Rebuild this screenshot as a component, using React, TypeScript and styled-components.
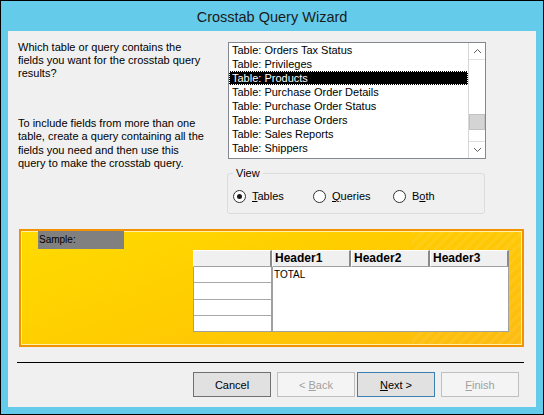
import React from 'react';
import styled, { createGlobalStyle } from 'styled-components';

const Global = createGlobalStyle`
  html, body { margin: 0; padding: 0; background: #ffffff; }
  body { font-family: "Liberation Sans", Arial, sans-serif; color: #000; }
  * { box-sizing: border-box; }
`;

const Window = styled.div`
  width: 544px;
  height: 415px;
  border: 1px solid #000;
  background: #65cbea;
  display: flex;
  flex-direction: column;
`;

const TitleBar = styled.div`
  height: 30px;
  display: flex;
  align-items: center;
  justify-content: center;
  font-size: 14.5px;
  color: #1a1a1a;
  padding-top: 1px;
`;

const Client = styled.div`
  margin: 0 7px 0 7px;
  height: 376px;
  background: #f0f0f0;
  display: flex;
  flex-direction: column;
  font-size: 11px;
`;

const TopRow = styled.div`
  display: flex;
  padding-left: 10px;
`;

const Instructions = styled.div`
  width: 210px;
  padding-top: 9.6px;
`;

const Para = styled.p<{ $gap?: number }>`
  margin: ${(p) => p.$gap ?? 0}px 0 0 0;
  line-height: 13.4px;
  white-space: nowrap;
`;

const RightCol = styled.div`
  width: 258px;
  padding-top: 11px;
  display: flex;
  flex-direction: column;
`;

const ListBox = styled.div`
  height: 117px;
  border: 1px solid #828790;
  background: #fff;
  display: flex;
  overflow: hidden;
`;

const ListItems = styled.div`
  flex: 1;
  display: flex;
  flex-direction: column;
  overflow: hidden;
`;

const ListItem = styled.div<{ $selected?: boolean }>`
  height: 14px;
  flex: none;
  line-height: 14px;
  padding-left: 3px;
  white-space: nowrap;
  background: ${(p) => (p.$selected ? '#000' : 'transparent')};
  color: ${(p) => (p.$selected ? '#fff' : '#000')};
  outline: ${(p) => (p.$selected ? '1px dotted #fff' : 'none')};
  outline-offset: -1px;
`;

const ScrollBar = styled.div`
  width: 17px;
  flex: none;
  display: flex;
  flex-direction: column;
  background: #fff;
  border-left: 1px solid #d6d6d6;
`;

const ScrollButton = styled.div<{ $bottom?: boolean }>`
  height: 17px;
  flex: none;
  display: flex;
  align-items: center;
  justify-content: center;
  background: #fff;
  border-top: ${(p) => (p.$bottom ? '1px solid #e0e0e0' : 'none')};
  border-bottom: ${(p) => (p.$bottom ? 'none' : '1px solid #e0e0e0')};
`;

const Track = styled.div`
  flex: 1;
  display: flex;
  flex-direction: column;
`;

const Thumb = styled.div<{ $offset: number }>`
  margin-top: ${(p) => p.$offset}px;
  height: 16px;
  background: #d4d4d4;
  border: 1px solid #c2c2c2;
`;

const ViewGroup = styled.fieldset`
  margin: 8px 0 0 -1px;
  padding: 0 0 0 5px;
  width: 258px;
  height: 47px;
  border: 1px solid #dcdcdc;
  border-radius: 3px;
  min-inline-size: 0;
`;

const Legend = styled.legend`
  padding: 0 3px;
  margin-left: 0;
  font-size: 11px;
  line-height: 13px;
`;

const RadioRow = styled.div`
  display: flex;
  padding-top: 10px;
`;

const RadioOption = styled.label`
  width: 80px;
  display: flex;
  align-items: center;
  gap: 6px;
  line-height: 13px;
`;

const RadioCircle = styled.span<{ $checked?: boolean }>`
  width: 13px;
  height: 13px;
  border-radius: 50%;
  border: 1px solid #333;
  background: #fff;
  display: flex;
  align-items: center;
  justify-content: center;
  flex: none;
  &::after {
    content: '';
    width: 5px;
    height: 5px;
    border-radius: 50%;
    background: ${(p) => (p.$checked ? '#1a1a1a' : 'transparent')};
  }
`;

const SamplePanel = styled.div`
  margin: 15px 0 0 11px;
  width: 505px;
  height: 118px;
  border: 2px solid #f39200;
  box-shadow: inset 0 0 0 1px #fff2a8;
  background:
    repeating-linear-gradient(135deg, rgba(255, 255, 255, 0.07) 0 3px, rgba(255, 255, 255, 0) 3px 7px) right top / 110px 100% no-repeat,
    linear-gradient(160deg, #ffdb00 0%, #ffcd00 45%, #fdbb10 100%);
  display: flex;
  flex-direction: column;
  font-size: 10px;
`;

const SampleLabel = styled.div`
  margin-left: 17px;
  width: 86px;
  height: 18px;
  line-height: 18px;
  padding-left: 1px;
  background: #808080;
  color: #000;
`;

const Grid = styled.div`
  margin: 1px 0 0 172px;
  display: flex;
`;

const RowHeaderCol = styled.div`
  width: 79px;
  display: flex;
  flex-direction: column;
`;

const HeaderCell = styled.div<{ $w: number }>`
  width: ${(p) => p.$w}px;
  height: 17px;
  background: #f0f0f0;
  border-top: 1px solid #fff;
  border-left: 1px solid #fff;
  border-right: 2px solid #8a8a8a;
  border-bottom: 1px solid #a0a0a0;
  font-size: 12px;
  font-weight: bold;
  line-height: 15px;
  padding-left: 2px;
  white-space: nowrap;
`;

const RowBody = styled.div`
  height: 65px;
  border: 1px solid #a0a0a0;
  border-top: none;
  background: #fff;
  display: flex;
  flex-direction: column;
`;

const RowCell = styled.div`
  flex: 1;
  border-bottom: 1px solid #a9a9a9;
  &:last-child { border-bottom: none; }
`;

const DataCol = styled.div`
  width: 237px;
  display: flex;
  flex-direction: column;
`;

const HeaderRow = styled.div`
  display: flex;
`;

const DataBody = styled.div`
  height: 65px;
  border: 1px solid #a0a0a0;
  border-top: none;
  background: #fff;
  padding: 1px 0 0 1px;
  line-height: 13px;
  font-size: 10px;
`;

const Separator = styled.div`
  margin: 15px 0 0 9px;
  width: 507px;
  height: 1px;
  background: #000;
`;

const ButtonRow = styled.div`
  display: flex;
  padding: 9px 0 0 185px;
`;

const Button = styled.button<{ $variant?: 'normal' | 'default' | 'disabled'; $ml?: number }>`
  width: 78px;
  height: 25px;
  margin: 0 0 0 ${(p) => p.$ml ?? 0}px;
  padding: 0;
  font-family: "Liberation Sans", Arial, sans-serif;
  font-size: 11px;
  background: ${(p) => (p.$variant === 'disabled' ? '#f4f4f4' : '#e1e1e1')};
  border: 1px solid
    ${(p) => (p.$variant === 'disabled' ? '#bfbfbf' : p.$variant === 'default' ? '#3c7fb1' : '#707070')};
  color: ${(p) => (p.$variant === 'disabled' ? '#a0a0a0' : '#000')};
`;

const Chevron = ({ up }: { up?: boolean }) => (
  <svg width="9" height="6" viewBox="0 0 9 6">
    <polyline
      points={up ? '1,5 4.5,1.5 8,5' : '1,1 4.5,4.5 8,1'}
      fill="none"
      stroke="#606060"
      strokeWidth="1"
    />
  </svg>
);

const tables = [
  'Table: Orders Tax Status',
  'Table: Privileges',
  'Table: Products',
  'Table: Purchase Order Details',
  'Table: Purchase Order Status',
  'Table: Purchase Orders',
  'Table: Sales Reports',
  'Table: Shippers',
  'Table: Strings',
];

export default function App() {
  return (
    <>
      <Global />
      <Window>
        <TitleBar>Crosstab Query Wizard</TitleBar>
        <Client>
          <TopRow>
            <Instructions>
              <Para>
                Which table or query contains the
                <br />
                fields you want for the crosstab query
                <br />
                results?
              </Para>
              <Para $gap={36}>
                To include fields from more than one
                <br />
                table, create a query containing all the
                <br />
                fields you need and then use this
                <br />
                query to make the crosstab query.
              </Para>
            </Instructions>
            <RightCol>
              <ListBox>
                <ListItems>
                  {tables.map((t) => (
                    <ListItem key={t} $selected={t === 'Table: Products'}>
                      {t}
                    </ListItem>
                  ))}
                </ListItems>
                <ScrollBar>
                  <ScrollButton>
                    <Chevron up />
                  </ScrollButton>
                  <Track>
                    <Thumb $offset={54} />
                  </Track>
                  <ScrollButton $bottom>
                    <Chevron />
                  </ScrollButton>
                </ScrollBar>
              </ListBox>
              <ViewGroup>
                <Legend>View</Legend>
                <RadioRow>
                  <RadioOption>
                    <RadioCircle $checked />
                    <span>
                      <u>T</u>ables
                    </span>
                  </RadioOption>
                  <RadioOption>
                    <RadioCircle />
                    <span>
                      <u>Q</u>ueries
                    </span>
                  </RadioOption>
                  <RadioOption>
                    <RadioCircle />
                    <span>
                      B<u>o</u>th
                    </span>
                  </RadioOption>
                </RadioRow>
              </ViewGroup>
            </RightCol>
          </TopRow>
          <SamplePanel>
            <SampleLabel>Sample:</SampleLabel>
            <Grid>
              <RowHeaderCol>
                <HeaderCell $w={79} />
                <RowBody>
                  <RowCell />
                  <RowCell />
                  <RowCell />
                  <RowCell />
                </RowBody>
              </RowHeaderCol>
              <DataCol>
                <HeaderRow>
                  <HeaderCell $w={79}>Header1</HeaderCell>
                  <HeaderCell $w={79}>Header2</HeaderCell>
                  <HeaderCell $w={79}>Header3</HeaderCell>
                </HeaderRow>
                <DataBody>TOTAL</DataBody>
              </DataCol>
            </Grid>
          </SamplePanel>
          <Separator />
          <ButtonRow>
            <Button $variant="normal">Cancel</Button>
            <Button $variant="disabled" $ml={6}>
              &lt; <u>B</u>ack
            </Button>
            <Button $variant="default" $ml={2}>
              <u>N</u>ext &gt;
            </Button>
            <Button $variant="disabled" $ml={6}>
              <u>F</u>inish
            </Button>
          </ButtonRow>
        </Client>
      </Window>
    </>
  );
}
